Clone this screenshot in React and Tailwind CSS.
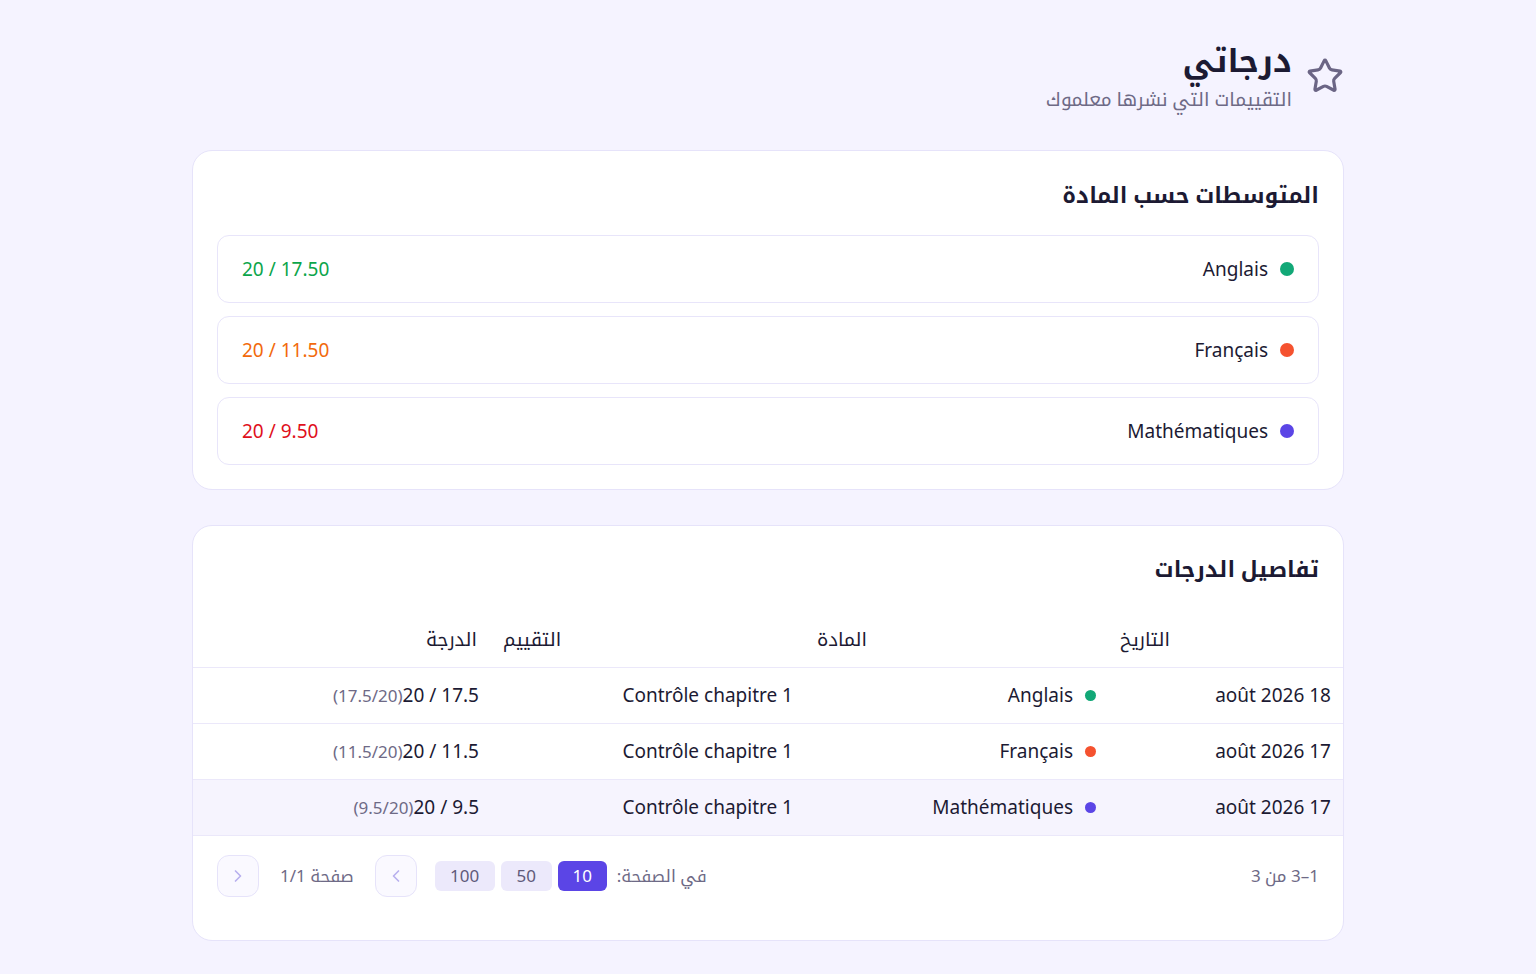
import React from 'react';
import { Star, ChevronLeft, ChevronRight } from 'lucide-react';

const averages = [
  { name: 'Anglais', dot: 'bg-[#12a877]', value: '17.50 / 20', color: 'text-[#0ca54b]' },
  { name: 'Français', dot: 'bg-[#f5522f]', value: '11.50 / 20', color: 'text-[#f26a0c]' },
  { name: 'Mathématiques', dot: 'bg-[#5b45e6]', value: '9.50 / 20', color: 'text-[#e0101c]' },
];

const grades = [
  { date: '18 août 2026', subject: 'Anglais', dot: 'bg-[#12a877]', exam: 'Contrôle chapitre 1', grade: '17.5 / 20', raw: '(17.5/20)' },
  { date: '17 août 2026', subject: 'Français', dot: 'bg-[#f5522f]', exam: 'Contrôle chapitre 1', grade: '11.5 / 20', raw: '(11.5/20)' },
  { date: '17 août 2026', subject: 'Mathématiques', dot: 'bg-[#5b45e6]', exam: 'Contrôle chapitre 1', grade: '9.5 / 20', raw: '(9.5/20)', active: true },
];

const App = () => {
  return (
    <div
      dir="rtl"
      className="min-h-screen bg-[#f5f3ff] text-[#1c1a33]"
      style={{ fontFamily: '"Noto Sans", "Noto Kufi Arabic", "Noto Sans Arabic", "DejaVu Sans", sans-serif' }}
    >
      <div className="w-[1152px] mx-auto pt-[38px] pb-8">
        {/* Page header */}
        <div className="flex items-center gap-[14px] mb-9">
          <Star size={38} strokeWidth={2} className="text-[#6b6585]" />
          <div>
            <h1 className="text-[32px] leading-[44px] font-bold">درجاتي</h1>
            <p className="mt-[2px] text-[19px] leading-[30px] text-[#6e6a86]">التقييمات التي نشرها معلموك</p>
          </div>
        </div>

        {/* Averages per subject */}
        <div className="bg-white rounded-[20px] border border-[#e6e3fa] px-6 pt-[26px] pb-6">
          <h2 className="text-[22px] leading-[34px] font-bold mb-[24px]">المتوسطات حسب المادة</h2>
          <div className="flex flex-col gap-[13px]">
            {averages.map((a) => (
              <div key={a.name} className="h-[68px] flex items-center justify-between px-6 rounded-xl border border-[#e8e5fa]">
                <div className="flex items-center gap-3">
                  <span className={`w-[14px] h-[14px] rounded-full ${a.dot}`} />
                  <span className="text-[19px]">{a.name}</span>
                </div>
                <span className={`text-[19px] ${a.color}`}>{a.value}</span>
              </div>
            ))}
          </div>
        </div>

        {/* Grade details */}
        <div className="mt-[35px] bg-white rounded-[20px] border border-[#e6e3fa] overflow-hidden">
          <h2 className="px-6 pt-[25px] text-[22px] leading-[34px] font-bold">تفاصيل الدرجات</h2>

          <div className="mt-[26px] h-[57px] flex items-center border-b border-[#ebe8fa] text-[19px]">
            <div className="w-[235px] shrink-0 px-3 text-left">التاريخ</div>
            <div className="w-[303px] shrink-0 px-3 text-left">المادة</div>
            <div className="w-[314px] shrink-0 px-3 text-left">التقييم</div>
            <div className="w-[77px] shrink-0 px-3 text-left whitespace-nowrap">الدرجة</div>
            <div className="flex-1" />
          </div>

          {grades.map((g, i) => (
            <div
              key={i}
              className={`h-[56px] flex items-center border-b border-[#ebe8fa] text-[19px] ${g.active ? 'bg-[#f6f4fe]' : ''}`}
            >
              <div className="w-[235px] shrink-0 px-3">{g.date}</div>
              <div className="w-[303px] shrink-0 px-3 flex items-center gap-3">
                <span className={`w-[11px] h-[11px] rounded-full ${g.dot}`} />
                <span>{g.subject}</span>
              </div>
              <div className="w-[314px] shrink-0 px-3">{g.exam}</div>
              <div className="w-[77px] shrink-0 px-3 whitespace-nowrap">
                <span>{g.grade}</span>
                <span className="text-[17px] text-[#6e6a86]">{g.raw}</span>
              </div>
              <div className="flex-1" />
            </div>
          ))}

          {/* Pagination */}
          <div className="flex items-center justify-between px-6 pt-[19px] pb-[43px] text-[17px] text-[#6e6a86]">
            <span>1–3 من 3</span>
            <div className="flex items-center">
              <span className="ml-[10px]">في الصفحة:</span>
              <div className="flex items-center gap-[6px]">
                <button className="h-[30px] w-[49px] rounded-md bg-[#5b45e6] text-white">10</button>
                <button className="h-[30px] w-[51px] rounded-md bg-[#ece9fb] text-[#5f5a7a]">50</button>
                <button className="h-[30px] w-[60px] rounded-md bg-[#ece9fb] text-[#5f5a7a]">100</button>
              </div>
              <button className="mr-[18px] w-[42px] h-[42px] rounded-xl border border-[#e6e3fa] bg-[#faf9ff] flex items-center justify-center text-[#b8b0ee]">
                <ChevronLeft size={20} />
              </button>
              <span className="mx-[21px]">صفحة 1/1</span>
              <button className="w-[42px] h-[42px] rounded-xl border border-[#e6e3fa] bg-[#faf9ff] flex items-center justify-center text-[#b8b0ee]">
                <ChevronRight size={20} />
              </button>
            </div>
          </div>
        </div>
      </div>
    </div>
  );
};

export default App;
